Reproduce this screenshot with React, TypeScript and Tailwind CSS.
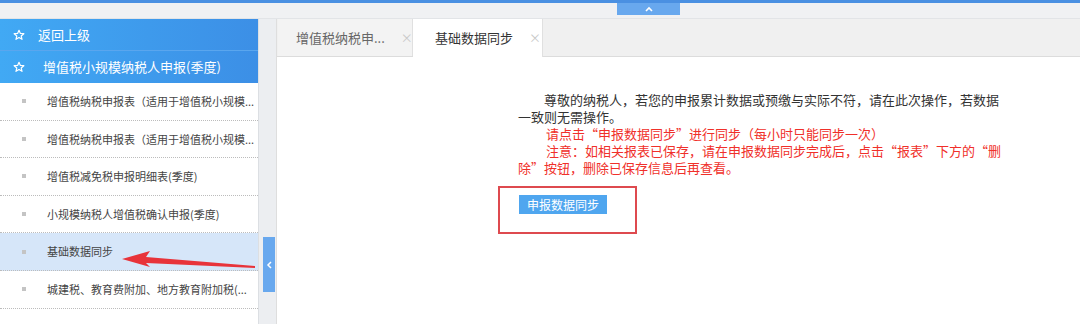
import React from "react";

const F = { fontFamily: '"Microsoft YaHei","Noto Sans CJK SC",sans-serif' };

function Star() {
  return (
    <svg width="12" height="12" viewBox="0 0 24 24" fill="none" stroke="white" strokeWidth="2.4" strokeLinejoin="round">
      <polygon points="12,2.5 14.8,8.9 21.7,9.4 16.4,13.9 18,20.7 12,17 6,20.7 7.6,13.9 2.3,9.4 9.2,8.9" />
    </svg>
  );
}

const items = [
  "增值税纳税申报表（适用于增值税小规模...",
  "增值税纳税申报表（适用于增值税小规模...",
  "增值税减免税申报明细表(季度)",
  "小规模纳税人增值税确认申报(季度)",
  "基础数据同步",
  "城建税、教育费附加、地方教育附加税(...",
];

export default function App() {
  return (
    <div className="relative w-[1080px] h-[324px] overflow-hidden bg-[#eef0f3]" style={F}>
      <div className="h-[3px] bg-[#4a90e2]" />
      <div className="h-[16px] border-b border-[#e2e4e7] bg-[#f0f1f3]">
        <div className="ml-[617px] w-[63px] h-[12px] bg-[#68a8ee] flex items-center justify-center">
          <svg width="8" height="6" viewBox="0 0 8 6"><path d="M1 5 L4 2 L7 5" stroke="white" strokeWidth="1.6" fill="none" /></svg>
        </div>
      </div>
      <div className="flex h-[305px]">
        <div className="w-[258px] shrink-0 bg-white flex flex-col">
          <div className="h-[32px] flex items-center pl-[13px] bg-gradient-to-r from-[#41a9f4] to-[#3c8fe6] border-b border-[#5aa6ee] text-white text-[13px]">
            <Star />
            <span className="ml-[13px]">返回上级</span>
          </div>
          <div className="h-[32px] flex items-center pl-[13px] bg-gradient-to-r from-[#41a9f4] to-[#3c8fe6] text-white text-[13px]">
            <Star />
            <span className="ml-[18px]">增值税小规模纳税人申报(季度)</span>
          </div>
          {items.map((t, i) => (
            <div
              key={i}
              className={`h-[37.6px] flex items-center border-b border-dotted border-[#bcbcbc] ${i === 4 ? "bg-[#d6e6f9]" : "bg-white"}`}
            >
              <span className="ml-[22px] shrink-0 w-[4px] h-[4px] bg-[#c4c4c4]" />
              <span className="ml-[21px] text-[11px] text-[#444] whitespace-nowrap">{t}</span>
            </div>
          ))}
        </div>
        <div className="w-[18px] shrink-0 relative bg-[#eceef1] border-l border-[#dcdfe3]">
          <div className="absolute left-[4px] top-[218px] w-[12px] h-[55px] bg-[#68a8ee] flex items-center justify-center">
            <svg width="6" height="8" viewBox="0 0 6 8"><path d="M5 1 L2 4 L5 7" stroke="white" strokeWidth="1.5" fill="none" /></svg>
          </div>
        </div>
        <div className="flex-1 flex flex-col bg-white border-l border-[#dedede]">
          <div className="h-[38px] bg-[#f0f0f0] flex items-end pl-[1px] border-b border-[#dcdcdc]">
            <div className="w-[135px] h-[37px] flex items-center pl-[18px] bg-[#f3f3f3] border-r border-[#e0e0e0] text-[13px] text-[#666] whitespace-nowrap">
              <span>增值税纳税申...</span>
              <span className="ml-[16px] text-[#c8c8c8] text-[12px]">×</span>
            </div>
            <div className="w-[130px] h-[38px] -mb-[1px] flex items-center pl-[22px] bg-white border-r border-[#e0e0e0] text-[13px] text-[#333] whitespace-nowrap">
              <span>基础数据同步</span>
              <span className="ml-[16px] text-[#c8c8c8] text-[12px]">×</span>
            </div>
          </div>
          <div className="flex-1 pt-[34px] pl-[241px]">
            <div className="text-[13px] leading-[17px] whitespace-nowrap">
              <div className="text-[#333] pl-[26px]">尊敬的纳税人，若您的申报累计数据或预缴与实际不符，请在此次操作，若数据</div>
              <div className="text-[#333]">一致则无需操作。</div>
              <div className="text-[#f0302a] pl-[28px]">请点击“申报数据同步”进行同步（每小时只能同步一次）</div>
              <div className="text-[#f0302a] pl-[28px]">注意：如相关报表已保存，请在申报数据同步完成后，点击“报表”下方的“删</div>
              <div className="text-[#f0302a]">除”按钮，删除已保存信息后再查看。</div>
            </div>
            <div className="mt-[10px] -ml-[20px] w-[139px] h-[48px] border-2 border-[#de4a4f] pl-[19px] pt-[7px]">
              <div className="w-[88px] h-[19px] bg-[#4fa6ef] text-white text-[12px] flex items-center justify-center">申报数据同步</div>
            </div>
          </div>
        </div>
      </div>
      <svg className="absolute left-0 top-0 pointer-events-none" width="1080" height="324">
        <polygon points="122,259 150,251 146,257 255,266 255,268 146,263 150,267" fill="#e8333a" />
      </svg>
    </div>
  );
}
